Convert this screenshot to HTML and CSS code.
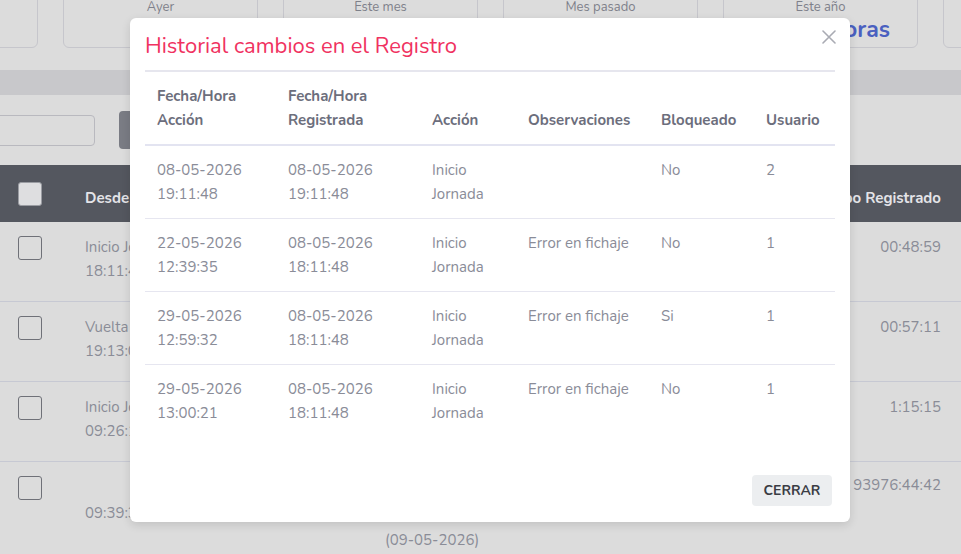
FILE: index.html
```html
<!DOCTYPE html>
<html lang="es">
<head>
<meta charset="utf-8">
<title>Historial cambios en el Registro</title>
<link rel="stylesheet" href="styles.css">
</head>
<body>
<div class="page">
  <div class="stats">
    <div class="card"><div class="card-label">Hoy</div><div class="card-value"></div></div>
    <div class="card"><div class="card-label">Ayer</div><div class="card-value"></div></div>
    <div class="card"><div class="card-label">Este mes</div><div class="card-value">0 Horas</div></div>
    <div class="card"><div class="card-label">Mes pasado</div><div class="card-value">0 Horas</div></div>
    <div class="card"><div class="card-label">Este año</div><div class="card-value">93976 Horas</div></div>
    <div class="card"><div class="card-label">Total</div><div class="card-value"></div></div>
  </div>
  <div class="band"></div>
  <div class="toolbar">
    <div class="search"></div>
    <div class="btn-dark">Buscar</div>
  </div>
  <table class="main-table">
    <thead>
      <tr><th class="c-check"><span class="cb cb-head"></span></th><th class="c-desde">Desde</th><th class="c-mid"></th><th class="c-tiempo">Tiempo Registrado</th></tr>
    </thead>
    <tbody>
      <tr><td class="c-check"><span class="cb"></span></td><td class="c-desde">Inicio Jornada<br>18:11:48</td><td class="c-mid"></td><td class="c-tiempo">00:48:59</td></tr>
      <tr><td class="c-check"><span class="cb"></span></td><td class="c-desde">Vuelta descanso<br>19:13:02</td><td class="c-mid"></td><td class="c-tiempo">00:57:11</td></tr>
      <tr><td class="c-check"><span class="cb"></span></td><td class="c-desde">Inicio Jornada<br>09:26:10</td><td class="c-mid"></td><td class="c-tiempo">1:15:15</td></tr>
      <tr class="last"><td class="c-check"><span class="cb"></span></td><td class="c-desde"><br>09:39:30</td><td class="c-mid"><br><br>(09-05-2026)</td><td class="c-tiempo">93976:44:42</td></tr>
    </tbody>
  </table>
</div>

<div class="modal">
  <div class="modal-header">
    <h2 class="modal-title">Historial cambios en el Registro</h2>
    <span class="modal-close" aria-label="Cerrar"><svg width="14" height="14" viewBox="0 0 14 14"><path d="M1 1L13 13M13 1L1 13" stroke="#a9abb3" stroke-width="1.6" fill="none" stroke-linecap="round"/></svg></span>
  </div>
  <div class="modal-body">
    <table class="hist">
      <colgroup>
        <col class="w1"><col class="w2"><col class="w3"><col class="w4"><col class="w5"><col class="w6">
      </colgroup>
      <thead>
        <tr>
          <th>Fecha/Hora<br>Acción</th>
          <th>Fecha/Hora<br>Registrada</th>
          <th>Acción</th>
          <th>Observaciones</th>
          <th>Bloqueado</th>
          <th>Usuario</th>
        </tr>
      </thead>
      <tbody>
        <tr><td>08-05-2026<br>19:11:48</td><td>08-05-2026<br>19:11:48</td><td>Inicio<br>Jornada</td><td></td><td>No</td><td>2</td></tr>
        <tr><td>22-05-2026<br>12:39:35</td><td>08-05-2026<br>18:11:48</td><td>Inicio<br>Jornada</td><td>Error en fichaje</td><td>No</td><td>1</td></tr>
        <tr><td>29-05-2026<br>12:59:32</td><td>08-05-2026<br>18:11:48</td><td>Inicio<br>Jornada</td><td>Error en fichaje</td><td>Si</td><td>1</td></tr>
        <tr><td>29-05-2026<br>13:00:21</td><td>08-05-2026<br>18:11:48</td><td>Inicio<br>Jornada</td><td>Error en fichaje</td><td>No</td><td>1</td></tr>
      </tbody>
    </table>
  </div>
  <div class="modal-footer">
    <button class="btn-close" type="button">CERRAR</button>
  </div>
</div>
</body>
</html>
```

FILE: styles.css
```css
html, body {
  margin: 0;
  padding: 0;
  background: #dcdcdc;
  overflow: hidden;
}
body {
  font-family: "Nunito", Lato, "Noto Sans", sans-serif;
  width: 961px;
  height: 554px;
  position: relative;
}
.page {
  width: 961px;
}
.stats {
  display: flex;
  gap: 25px;
  margin-left: -157px;
  margin-top: -20px;
}
.card {
  flex: 0 0 195px;
  border: 1px solid #c6c6cc;
  border-radius: 6px;
  box-sizing: border-box;
  height: 68px;
  text-align: center;
  padding-top: 17px;
}
.card-label {
  font-size: 13px;
  line-height: 18px;
  color: #7e808a;
}
.card-value {
  font-size: 23px;
  line-height: 28px;
  font-weight: 700;
  color: #4a60c0;
  white-space: nowrap;
}
.band {
  height: 25px;
  margin-top: 22px;
  background: #c8c8cb;
}
.toolbar {
  display: flex;
  align-items: center;
  gap: 24px;
  height: 70px;
}
.search {
  width: 150px;
  margin-left: -55px;
  height: 31px;
  box-sizing: border-box;
  border: 1px solid #b9b9bf;
  border-radius: 4px;
}
.btn-dark {
  width: 90px;
  height: 38px;
  border-radius: 4px;
  background: #7a7c84;
  color: #dcdcdc;
  font-size: 14px;
  line-height: 38px;
  text-align: center;
}
.main-table {
  width: 961px;
  border-collapse: collapse;
  font-size: 15px;
  color: #8a8c97;
}
.main-table thead tr {
  background: #54575f;
  height: 57px;
}
.main-table th {
  color: #e4e4e8;
  font-weight: 700;
  text-align: left;
  padding: 8px 0 0;
  vertical-align: middle;
}
.main-table th.c-tiempo {
  text-align: right;
  padding-right: 20px;
}
.main-table th.c-check {
  padding-top: 0;
}
.main-table td {
  vertical-align: top;
  padding: 13px 0 0;
  line-height: 24px;
  height: 66px;
  border-bottom: 1px solid #c7c9d3;
}
.c-check {
  width: 85px;
  padding-left: 18px !important;
  box-sizing: border-box;
}
.c-desde {
  width: 300px;
  white-space: nowrap;
}
.main-table td.c-tiempo {
  text-align: right;
  padding-right: 20px;
}
.main-table tr.last td {
  border-bottom: none;
  line-height: 27.5px;
  padding-top: 10px;
}
.main-table tr.last td.c-check {
  padding-top: 13px;
}
.main-table tr.last td.c-mid {
  padding-left: 0;
}
.cb {
  display: block;
  width: 24px;
  height: 24px;
  box-sizing: border-box;
  border: 1px solid #6f7178;
  border-radius: 3px;
  margin-top: 1px;
}
.cb-head {
  background: #dedee0;
  border-color: #9a9ca2;
  margin-top: 0;
}

/* modal */
.modal {
  position: absolute;
  left: 130px;
  top: 18px;
  width: 720px;
  height: 504px;
  background: #fff;
  border-radius: 6px;
  box-shadow: 0 3px 10px rgba(0, 0, 0, 0.12);
  box-sizing: border-box;
  padding: 0 15px;
  display: flex;
  flex-direction: column;
}
.modal-header {
  display: flex;
  justify-content: space-between;
  align-items: flex-start;
  border-bottom: 2px solid #e6e6ee;
  height: 54px;
  box-sizing: border-box;
}
.modal-title {
  margin: 14px 0 0;
  font-size: 22px;
  line-height: 28px;
  font-weight: 400;
  color: #f0325f;
}
.modal-close {
  display: block;
  width: 14px;
  height: 14px;
  margin-top: 12px;
  margin-right: -1px;
}
.modal-close svg {
  display: block;
}
.modal-body {
  flex: 1;
}
.hist {
  width: 690px;
  table-layout: fixed;
  border-collapse: collapse;
  font-size: 15px;
  line-height: 24px;
}
.w1 { width: 131px; }
.w2 { width: 144px; }
.w3 { width: 96px; }
.w4 { width: 133px; }
.w5 { width: 105px; }
.w6 { width: 81px; }
.hist th {
  text-align: left;
  vertical-align: bottom;
  font-weight: 700;
  color: #6c6e7c;
  padding: 12px 12px 12px;
  border-bottom: 2px solid #e3e4f1;
  white-space: nowrap;
}
.hist td {
  vertical-align: top;
  color: #8a8c98;
  padding: 12px 12px 12px;
  border-bottom: 1px solid #e6e6f0;
  white-space: nowrap;
}
.hist tbody tr:last-child td {
  border-bottom: none;
}
.modal-footer {
  display: flex;
  justify-content: flex-end;
  padding: 0 3px 16px 0;
}
.btn-close {
  font-family: inherit;
  font-size: 14px;
  font-weight: 700;
  color: #3a3c44;
  background: #eceef0;
  border: none;
  border-radius: 4px;
  width: 80px;
  height: 31px;
  padding: 0;
}
```
